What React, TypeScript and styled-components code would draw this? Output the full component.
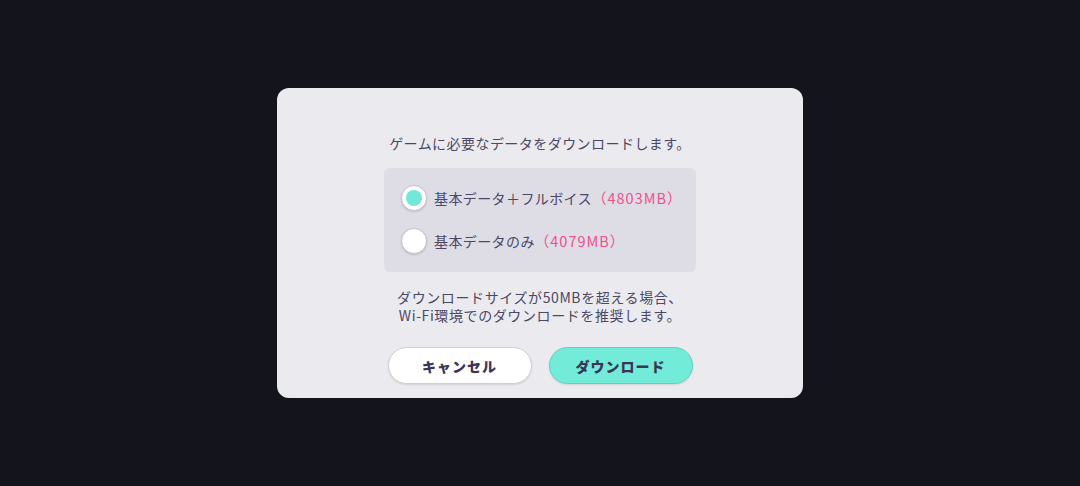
import React, { useState } from 'react';
import styled, { createGlobalStyle } from 'styled-components';

const GlobalStyle = createGlobalStyle`
  html, body {
    margin: 0;
    padding: 0;
    background: #14141c;
  }
  body {
    font-family: "Noto Sans CJK JP", "Noto Sans", sans-serif;
  }
`;

const options = [
  { id: 'full', label: '基本データ＋フルボイス', size: '（4803MB）' },
  { id: 'basic', label: '基本データのみ', size: '（4079MB）' },
];

const DownloadDialog = () => {
  const [selected, setSelected] = useState('full');

  return (
    <Screen>
      <GlobalStyle />
      <Dialog>
        <Lead>ゲームに必要なデータをダウンロードします。</Lead>
        <OptionPanel>
          {options.map((opt) => (
            <OptionRow key={opt.id} onClick={() => setSelected(opt.id)}>
              <Radio $checked={selected === opt.id} />
              <OptionLabel>
                {opt.label}
                <Size>{opt.size}</Size>
              </OptionLabel>
            </OptionRow>
          ))}
        </OptionPanel>
        <Note>
          ダウンロードサイズが50MBを超える場合、
          <br />
          Wi-Fi環境でのダウンロードを推奨します。
        </Note>
        <Buttons>
          <Button>キャンセル</Button>
          <Button $primary>ダウンロード</Button>
        </Buttons>
      </Dialog>
    </Screen>
  );
};

const Screen = styled.div`
  width: 100vw;
  height: 100vh;
  display: flex;
  align-items: center;
  justify-content: center;
  background: #14141c;
`;

const Dialog = styled.div`
  width: 526px;
  height: 310px;
  box-sizing: border-box;
  padding: 45px 0 0;
  background: #ebebef;
  border-radius: 12px;
  display: flex;
  flex-direction: column;
  align-items: center;
  color: #4b4866;
`;

const Lead = styled.p`
  margin: 0;
  font-size: 14px;
  line-height: 20px;
  letter-spacing: 0.45px;
`;

const OptionPanel = styled.div`
  margin-top: 15px;
  width: 312px;
  height: 104px;
  box-sizing: border-box;
  padding: 17px 17px 0;
  background: #dedde6;
  border-radius: 6px;
  display: flex;
  flex-direction: column;
  gap: 17px;
`;

const OptionRow = styled.label`
  display: flex;
  align-items: center;
  gap: 7px;
  cursor: pointer;
`;

const Radio = styled.span<{ $checked: boolean }>`
  width: 26px;
  height: 26px;
  box-sizing: border-box;
  border-radius: 50%;
  background: #ffffff;
  border: 1.5px solid #c6c5ce;
  box-shadow: 0 1px 2px rgba(60, 60, 80, 0.2);
  display: flex;
  align-items: center;
  justify-content: center;
  flex-shrink: 0;

  &::after {
    content: "";
    width: 16px;
    height: 16px;
    border-radius: 50%;
    background: ${(p) => (p.$checked ? '#72e8d6' : 'transparent')};
  }
`;

const OptionLabel = styled.span`
  font-size: 14px;
  line-height: 20px;
  letter-spacing: 0.4px;
  white-space: nowrap;
`;

const Size = styled.span`
  color: #f0508a;
  font-size: 14.5px;
  letter-spacing: 1px;
`;

const Note = styled.p`
  margin: 16px 0 0;
  font-size: 14px;
  line-height: 18px;
  letter-spacing: 0.6px;
  text-align: center;
`;

const Buttons = styled.div`
  margin-top: 23px;
  display: flex;
  gap: 17px;
`;

const Button = styled.button<{ $primary?: boolean }>`
  width: 144px;
  height: 37px;
  border-radius: 19px;
  border: 1.5px solid ${(p) => (p.$primary ? '#5fd3c2' : '#cfcfd6')};
  background: ${(p) => (p.$primary ? '#72ebd9' : '#ffffff')};
  box-shadow: 0 1px 2px rgba(60, 60, 80, 0.15);
  font-family: "Noto Sans CJK JP", sans-serif;
  font-size: 14px;
  font-weight: 900;
  letter-spacing: 1px;
  color: #3a3656;
  cursor: pointer;
`;

export default DownloadDialog;
